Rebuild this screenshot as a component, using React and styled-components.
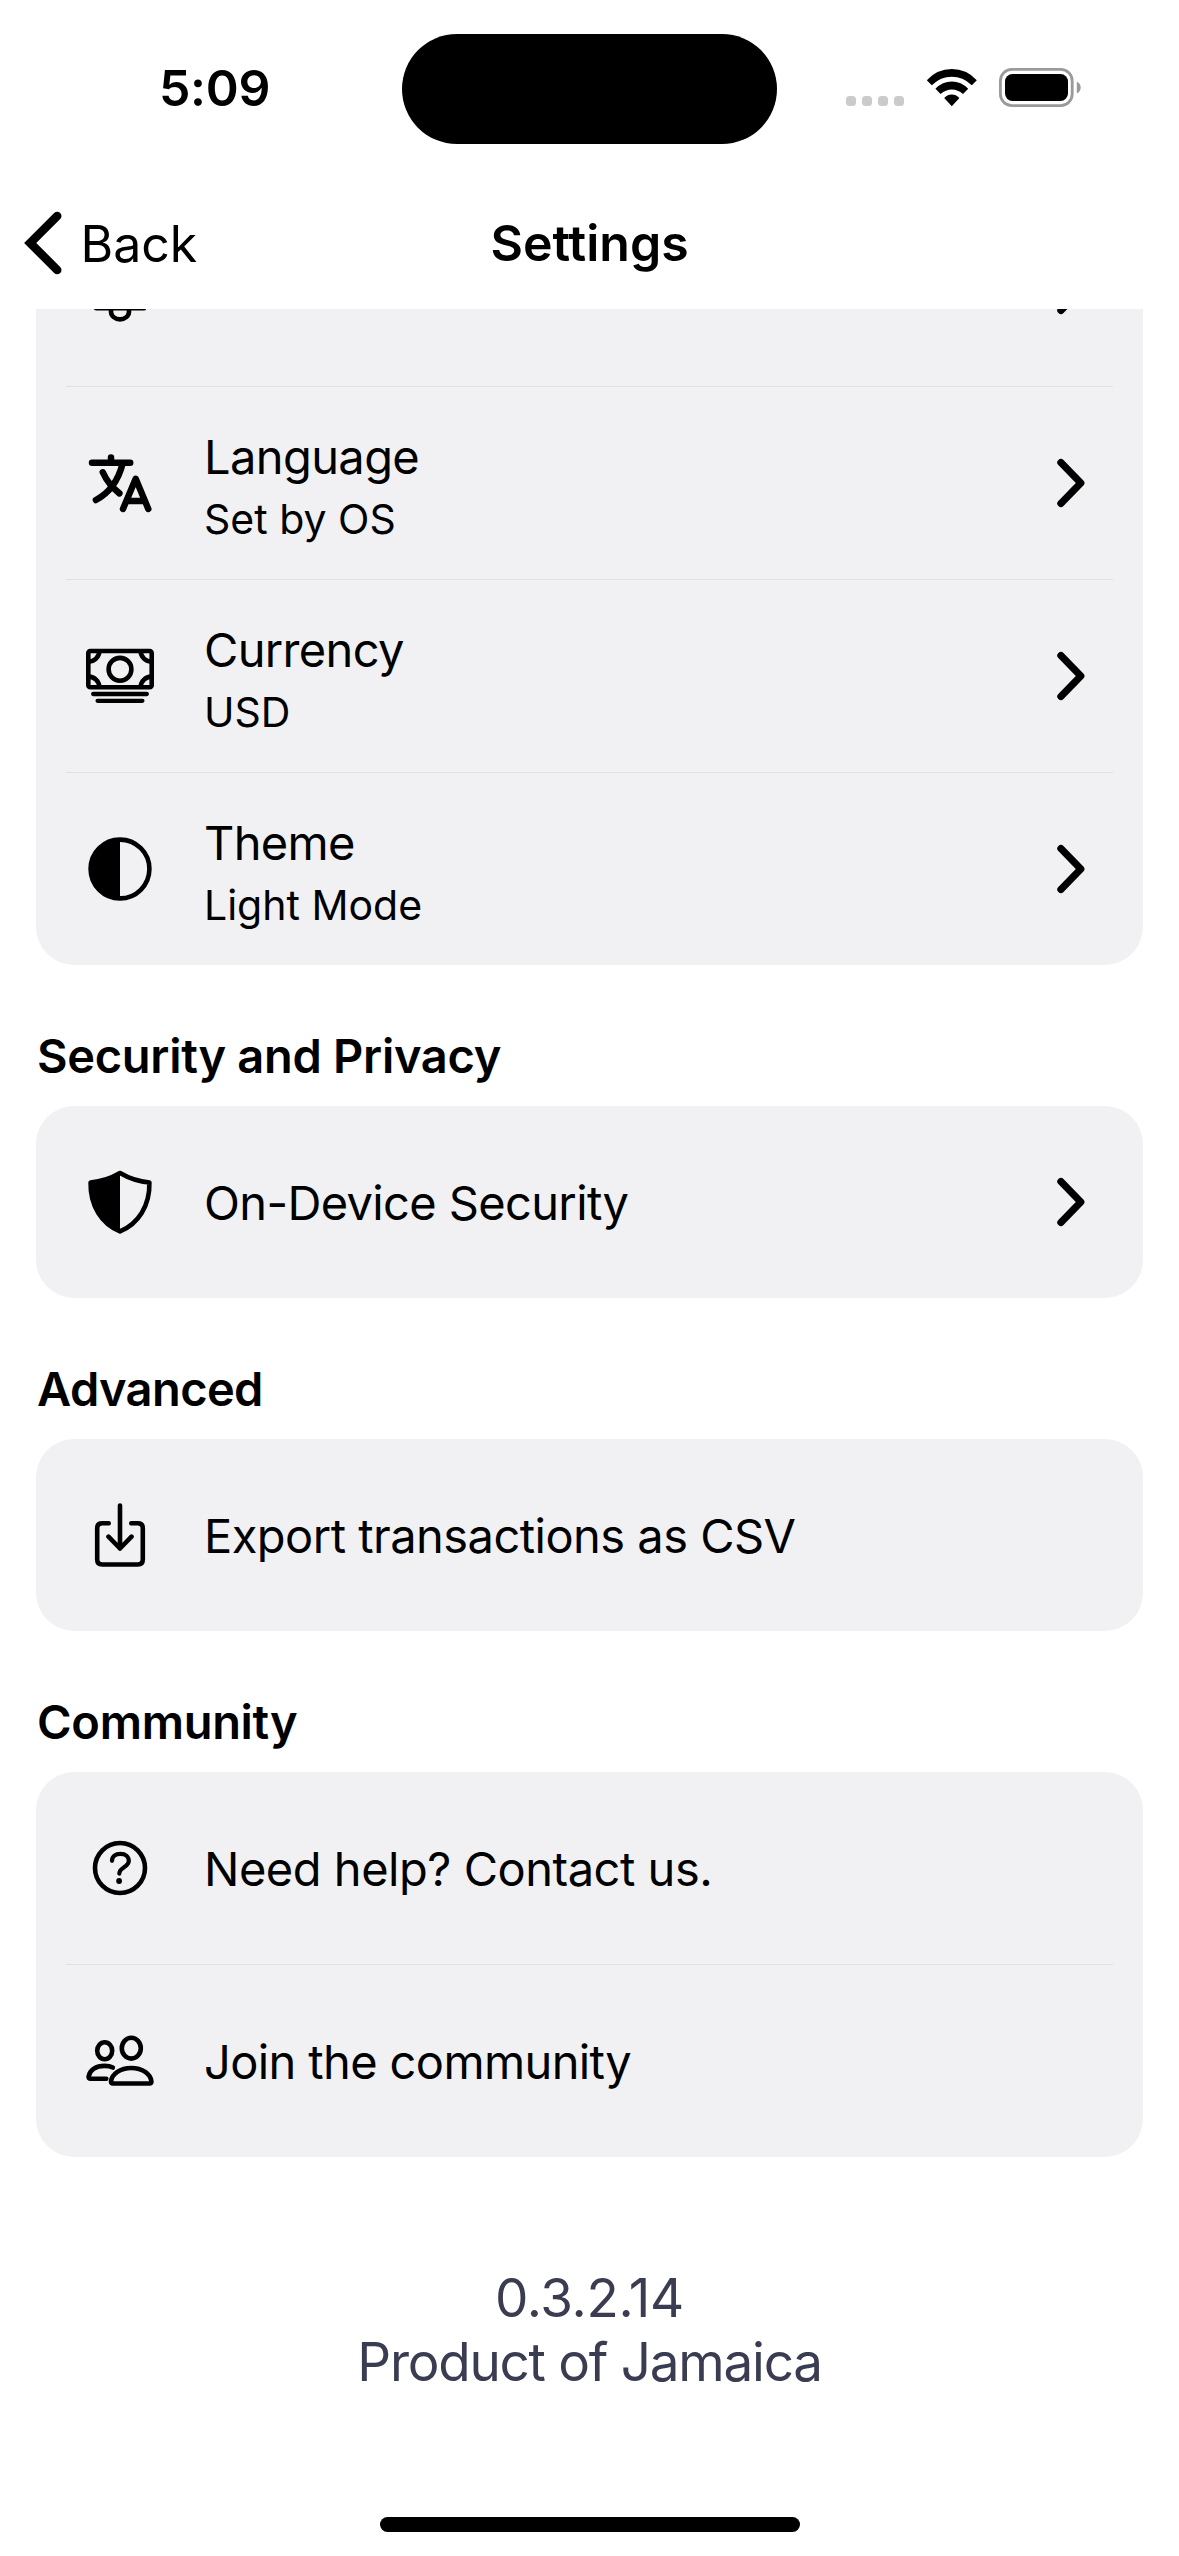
import React from "react";
import styled, { createGlobalStyle } from "styled-components";

const GlobalStyle = createGlobalStyle`
  * { box-sizing: border-box; }
  body {
    margin: 0;
    background: #ffffff;
    color: #000000;
    font-family: Inter, Roboto, "Liberation Sans", sans-serif;
  }
`;

const Screen = styled.div`
  width: 1179px;
  height: 2556px;
  display: flex;
  flex-direction: column;
  overflow: hidden;
  background: #ffffff;
`;

const StatusBar = styled.header`
  flex: none;
  height: 177px;
  display: grid;
  grid-template-columns: 402px 375px 402px;
`;

const Clock = styled.div`
  padding: 57px 0 0 27px;
  text-align: center;
  font-size: 50px;
  line-height: 62px;
  font-weight: 600;
  letter-spacing: -0.3px;
`;

const Island = styled.div`
  margin-top: 34px;
  height: 110px;
  border-radius: 55px;
  background: #000000;
`;

const StatusIcons = styled.div`
  padding: 68px 0 0 69px;
  display: flex;
  align-items: flex-start;
`;

const SignalDots = styled.div`
  display: flex;
  gap: 6px;
  padding-top: 28px;
  margin-right: 22px;
`;

const Dot = styled.span`
  width: 10px;
  height: 10px;
  border-radius: 3.5px;
  background: #cbcbcb;
`;

const Wifi = styled.svg`
  width: 52px;
  height: 40px;
  margin-right: 21px;
`;

const Battery = styled.svg`
  width: 83px;
  height: 39px;
`;

const NavBar = styled.nav`
  flex: none;
  height: 132px;
  display: grid;
  grid-template-columns: 1fr auto 1fr;
  align-items: center;
  padding: 0 24px;
`;

const BackButton = styled.div`
  display: flex;
  align-items: center;
  gap: 18.5px;
`;

const BackArrow = styled.svg`
  width: 38px;
  height: 64px;
`;

const BackLabel = styled.span`
  font-size: 50px;
  line-height: 62px;
  padding-top: 2px;
`;

const NavTitle = styled.h1`
  margin: 0;
  font-size: 50px;
  line-height: 62px;
  font-weight: 600;
`;

const ScrollArea = styled.main`
  flex: 1;
  min-height: 0;
  overflow: hidden;
`;

const Content = styled.div`
  margin-top: -115px;
  padding: 0 36px;
  display: flex;
  flex-direction: column;
`;

const Card = styled.section`
  border-radius: 38px;
  background: #f1f1f3;
`;

const SectionTitle = styled.h2`
  margin: 0;
  height: 141px;
  padding: 61px 0 20px 1px;
  font-size: 47px;
  line-height: 60px;
  font-weight: 600;
  letter-spacing: ${(p) => p.$tracking}px;
  white-space: nowrap;
`;

const Row = styled.div`
  height: 192px;
  display: flex;
  align-items: center;
  padding: 0 58px 0 48px;
`;

const Divider = styled.div`
  height: 1px;
  margin: 0 30px;
  background: #e1e1e4;
`;

const RowIcon = styled.svg`
  flex: none;
  width: 72px;
  height: 72px;
  margin-right: 48px;
  fill: none;
  stroke: #000000;
  stroke-width: 4.6;
  stroke-linecap: round;
  stroke-linejoin: round;
`;

const RowText = styled.div`
  flex: 1;
  display: flex;
  flex-direction: column;
  gap: 7px;
  padding-top: ${(p) => (p.$double ? 7 : 2)}px;
  white-space: nowrap;
`;

const RowTitle = styled.span`
  font-size: 47px;
  line-height: 58px;
  letter-spacing: ${(p) => p.$tracking}px;
`;

const RowSubtitle = styled.span`
  font-size: 41px;
  line-height: 52px;
`;

const Chevron = styled.svg`
  flex: none;
  width: 28px;
  height: 50px;
`;

const Footer = styled.footer`
  padding-top: 109px;
  display: flex;
  flex-direction: column;
  align-items: center;
  color: #3a3d52;
`;

const FooterLine = styled.span`
  font-size: 53px;
  line-height: 64px;
  letter-spacing: ${(p) => p.$tracking}px;
`;

const HomeBar = styled.div`
  flex: none;
  height: 39px;
  display: flex;
  justify-content: center;
`;

const HomeIndicator = styled.div`
  width: 420px;
  height: 15px;
  border-radius: 8px;
  background: #000000;
`;

const BellIcon = () => (
  <RowIcon viewBox="0 0 72 72">
    <path d="M12 54.2H60C54 48 54 42 54 28C54 16 46 8 36 8S18 16 18 28C18 42 18 48 12 54.2Z" />
    <path d="M27 54.2V57.5C27 62 31 65.4 36 65.4S45 62 45 57.5V54.2" />
  </RowIcon>
);

const LanguageIcon = () => (
  <RowIcon viewBox="0 0 72 72">
    <g strokeWidth="6.5">
      <path d="M27 10.4V15.7M8 15.7H46.2" />
      <path d="M38.5 17C35 30.5 27 45 11.9 53" />
      <path d="M18.8 25.3C22 32.5 28 40.5 35.4 46.4" />
      <path d="M39 61.9L51.7 31.8L64.3 61.9M43 54H60.4" />
    </g>
  </RowIcon>
);

const CurrencyIcon = () => (
  <RowIcon viewBox="0 0 72 72">
    <rect x="4.3" y="11" width="63.4" height="36.2" rx="2" />
    <circle cx="36" cy="29.3" r="11.4" />
    <path d="M15.4 11.5A11 11 0 0 1 4.8 21.6M56.6 11.5A11 11 0 0 0 67.2 21.6M15.4 46.7A11 11 0 0 0 4.8 36.6M56.6 46.7A11 11 0 0 1 67.2 36.6" />
    <path d="M9.2 54H62.8M13.6 60.8H58.4" strokeWidth="4.3" />
  </RowIcon>
);

const ThemeIcon = () => (
  <RowIcon viewBox="0 0 72 72">
    <circle cx="36" cy="36" r="29.4" />
    <path d="M36 6.5A29.5 29.5 0 0 0 36 65.5Z" fill="#000" stroke="none" />
  </RowIcon>
);

const ShieldIcon = () => (
  <RowIcon viewBox="0 0 72 72">
    <path d="M36 7C44.5 12 54 15.5 65.4 16.5C66 40 54 58 36 65.4C18 58 6 40 6.6 16.5C18 15.5 27.5 12 36 7Z" />
    <path d="M36 7C27.5 12 18 15.5 6.6 16.5C6 40 18 58 36 65.4Z" fill="#000" stroke="none" />
  </RowIcon>
);

const ExportIcon = () => (
  <RowIcon viewBox="0 0 72 72">
    <path d="M24.7 24.2H18.2Q13.2 24.2 13.2 29.2V60.5Q13.2 65.5 18.2 65.5H53.8Q58.8 65.5 58.8 60.5V29.2Q58.8 24.2 53.8 24.2H47.3" />
    <path d="M36 6.6V49.5M24.5 37.7L36 49.5L47.5 37.7" />
  </RowIcon>
);

const HelpIcon = () => (
  <RowIcon viewBox="0 0 72 72">
    <circle cx="36" cy="36" r="25" />
    <path d="M28 28.8C28 24.5 31.5 21.8 36.5 21.8C41.5 21.8 44.8 24.7 44.8 28.8C44.8 35.5 35.4 35 35.3 41.6" strokeWidth="4.2" />
    <circle cx="35.1" cy="49" r="2.9" fill="#000" stroke="none" />
  </RowIcon>
);

const CommunityIcon = () => (
  <RowIcon viewBox="0 0 72 72">
    <ellipse cx="20.7" cy="25.7" rx="7.5" ry="8.5" />
    <ellipse cx="47.3" cy="23.2" rx="9.5" ry="10.4" />
    <path d="M22.3 53.8H6.7Q4.3 53.8 4.6 51.4C6 45 12 40.9 20.5 40.9C24 40.9 26.8 41.5 28.8 42.6" />
    <path d="M29 58.5H65.5Q67.7 58.5 67.4 56.3C66.5 49 58.5 43 47.3 43S28 49 27 56.3Q26.8 58.5 29 58.5Z" />
  </RowIcon>
);

const Arrow = () => (
  <Chevron viewBox="0 0 28 50">
    <path d="M3.9 4.5L23.8 25L3.9 45.5" fill="none" stroke="#000" strokeWidth="7.2" strokeLinecap="round" strokeLinejoin="round" />
  </Chevron>
);

const SettingsRow = ({ icon, title, tracking, subtitle, arrow }) => (
  <Row>
    {icon}
    <RowText $double={Boolean(subtitle)}>
      {title && <RowTitle $tracking={tracking}>{title}</RowTitle>}
      {subtitle && <RowSubtitle>{subtitle}</RowSubtitle>}
    </RowText>
    {arrow && <Arrow />}
  </Row>
);

export default function App() {
  return (
    <>
      <GlobalStyle />
      <Screen>
        <StatusBar>
          <Clock>5:09</Clock>
          <Island />
          <StatusIcons>
            <SignalDots>
              <Dot />
              <Dot />
              <Dot />
              <Dot />
            </SignalDots>
            <Wifi viewBox="0 0 52 40">
              <path d="M0.8 12.2Q11 1 25.8 1T50.8 12.2L45.8 17.2Q37 8.8 25.8 8.8T5.8 17.2Z" />
              <path d="M9.4 20.8Q16.5 13.6 25.8 13.6T42.2 20.8L37 25.9Q32 21.4 25.8 21.4T14.6 25.9Z" />
              <path d="M18.2 30Q21.6 26.6 25.8 26.6T33.4 30L25.8 38.2Z" />
            </Wifi>
            <Battery viewBox="0 0 83 39">
              <rect x="1.4" y="1.4" width="71.8" height="36.2" rx="11.5" fill="none" stroke="#9a9a9a" strokeWidth="2.8" />
              <rect x="6" y="6" width="63" height="27" rx="7.5" />
              <path d="M77.8 13.5Q81.7 15.5 81.7 19.5T77.8 25.5Z" fill="#9a9a9a" />
            </Battery>
          </StatusIcons>
        </StatusBar>

        <NavBar>
          <BackButton>
            <BackArrow viewBox="0 0 38 64">
              <path d="M33.2 5L6.2 32L33.2 59" fill="none" stroke="#000" strokeWidth="8.6" strokeLinecap="round" strokeLinejoin="miter" />
            </BackArrow>
            <BackLabel>Back</BackLabel>
          </BackButton>
          <NavTitle>Settings</NavTitle>
        </NavBar>

        <ScrollArea>
          <Content>
            <Card>
              <SettingsRow icon={<BellIcon />} arrow />
              <Divider />
              <SettingsRow icon={<LanguageIcon />} title="Language" tracking={-0.6} subtitle="Set by OS" arrow />
              <Divider />
              <SettingsRow icon={<CurrencyIcon />} title="Currency" tracking={-0.65} subtitle="USD" arrow />
              <Divider />
              <SettingsRow icon={<ThemeIcon />} title="Theme" tracking={-0.7} subtitle="Light Mode" arrow />
            </Card>

            <SectionTitle $tracking={-0.3}>Security and Privacy</SectionTitle>
            <Card>
              <SettingsRow icon={<ShieldIcon />} title="On-Device Security" tracking={-0.63} arrow />
            </Card>

            <SectionTitle $tracking={-0.6}>Advanced</SectionTitle>
            <Card>
              <SettingsRow icon={<ExportIcon />} title="Export transactions as CSV" tracking={-0.53} />
            </Card>

            <SectionTitle $tracking={-0.3}>Community</SectionTitle>
            <Card>
              <SettingsRow icon={<HelpIcon />} title="Need help? Contact us." tracking={-0.47} />
              <Divider />
              <SettingsRow icon={<CommunityIcon />} title="Join the community" tracking={-0.62} />
            </Card>

            <Footer>
              <FooterLine $tracking={-0.35}>0.3.2.14</FooterLine>
              <FooterLine $tracking={-1.25}>Product of Jamaica</FooterLine>
            </Footer>
          </Content>
        </ScrollArea>

        <HomeBar>
          <HomeIndicator />
        </HomeBar>
      </Screen>
    </>
  );
}
